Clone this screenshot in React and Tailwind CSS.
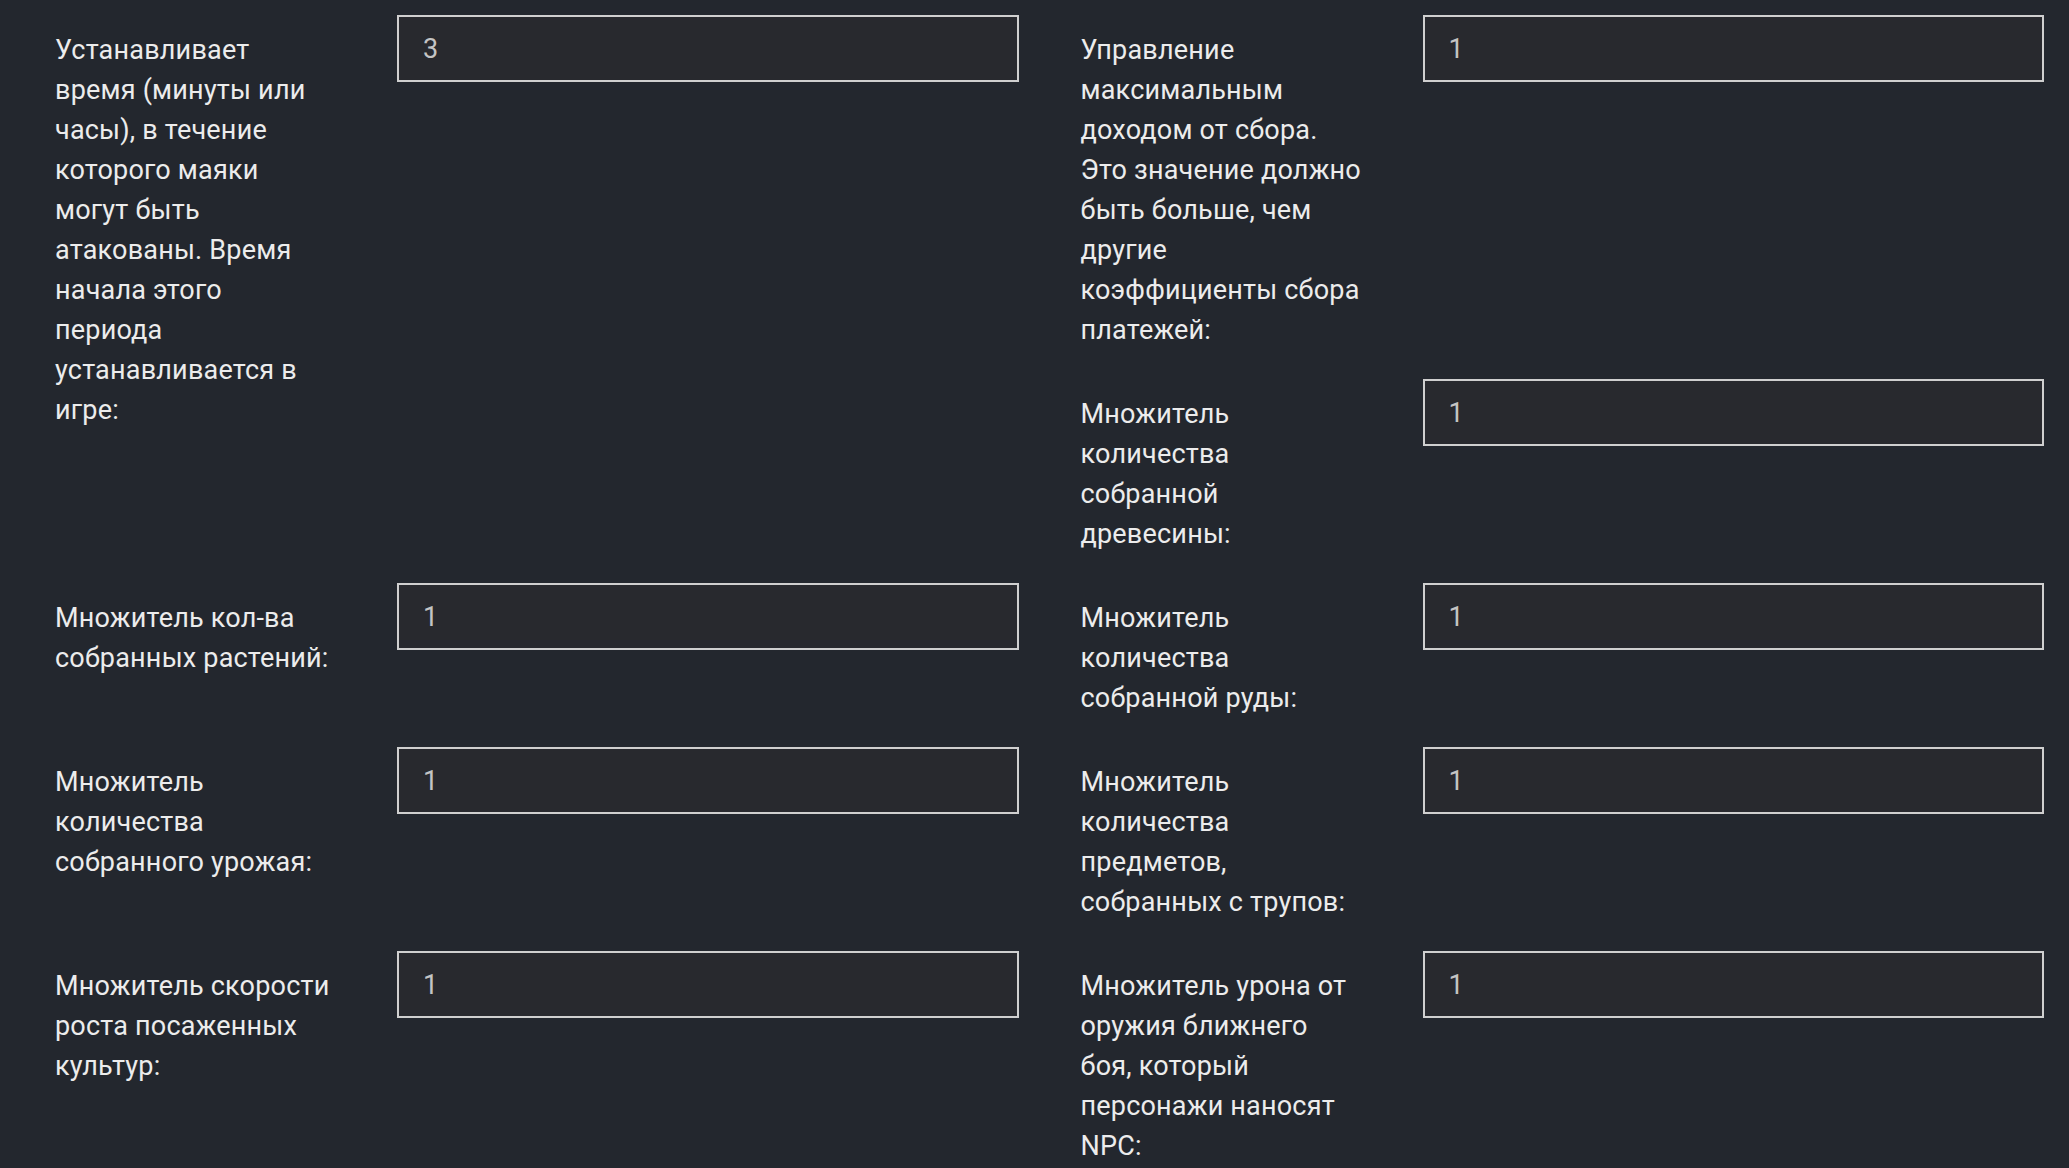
import React from 'react'

// Settings form: each field is a label on the left and a plain text input on the right.
// Labels are kept as their wrapped lines so the column reads like the original.
const fields = [
  {
    id: 'beacon-time',
    lines: ['Устанавливает', 'время (минуты или', 'часы), в течение', 'которого маяки', 'могут быть', 'атакованы. Время', 'начала этого', 'периода', 'устанавливается в', 'игре:'],
    value: '3',
    tall: true,
  },
  {
    id: 'max-income',
    lines: ['Управление', 'максимальным', 'доходом от сбора.', 'Это значение должно', 'быть больше, чем', 'другие', 'коэффициенты сбора', 'платежей:'],
    value: '1',
  },
  { id: 'wood', lines: ['Множитель', 'количества', 'собранной', 'древесины:'], value: '1' },
  { id: 'plants', lines: ['Множитель кол-ва', 'собранных растений:'], value: '1' },
  { id: 'ore', lines: ['Множитель', 'количества', 'собранной руды:'], value: '1' },
  { id: 'harvest', lines: ['Множитель', 'количества', 'собранного урожая:'], value: '1' },
  { id: 'loot', lines: ['Множитель', 'количества', 'предметов,', 'собранных с трупов:'], value: '1' },
  { id: 'growth', lines: ['Множитель скорости', 'роста посаженных', 'культур:'], value: '1' },
  { id: 'melee', lines: ['Множитель урона от', 'оружия ближнего', 'боя, который', 'персонажи наносят', 'NPC:'], value: '1' },
]

function Field({ field }) {
  return (
    <div className={`flex items-start ${field.tall ? 'row-span-2' : ''}`}>
      <label htmlFor={field.id} className="w-[342px] shrink-0 pt-[15px] text-[27px] leading-[40px] tracking-[0.2px] text-[#ececec]">
        {field.lines.map((l, i) => (
          <span key={i} className="block whitespace-nowrap">{l}</span>
        ))}
      </label>
      <input
        id={field.id}
        type="text"
        defaultValue={field.value}
        className="h-[67px] flex-1 min-w-0 border-2 border-[#cfcfcf] bg-[#28292e] px-[24px] text-[27px] text-[#c4c4c4] outline-none"
      />
    </div>
  )
}

export default function App() {
  return (
    <div
      className="h-[1168px] overflow-hidden bg-[#23272e] pl-[55px] pt-[15px]"
      style={{ fontFamily: 'Roboto, "Noto Sans", sans-serif' }}
    >
      <div className="grid w-[1989px] grid-cols-2 gap-x-[62px] gap-y-[29px]">
        {fields.map(f => <Field key={f.id} field={f} />)}
      </div>
    </div>
  )
}
